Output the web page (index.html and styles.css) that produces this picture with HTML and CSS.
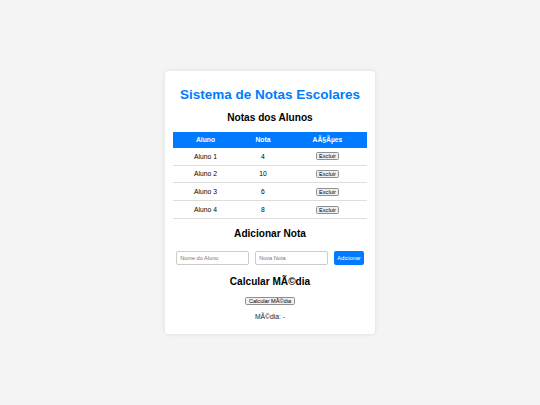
FILE: index.html
```html
<!DOCTYPE html>
<html lang="pt">
<head>
    <meta charset="UTF-8">
    <meta name="viewport" content="width=device-width, initial-scale=1.0">
    <title>Sistema de Notas Escolares</title>
    <link rel="stylesheet" href="styles.css">
</head>
<body>
    <div class="container">
        <h1>Sistema de Notas Escolares</h1>

        <h2>Notas dos Alunos</h2>
        <table class="notas">
            <thead>
                <tr>
                    <th class="col-aluno">Aluno</th>
                    <th class="col-nota">Nota</th>
                    <th>AÃ§Ãµes</th>
                </tr>
            </thead>
            <tbody>
                <tr><td>Aluno 1</td><td>4</td><td><button class="btn-small">Excluir</button></td></tr>
                <tr><td>Aluno 2</td><td>10</td><td><button class="btn-small">Excluir</button></td></tr>
                <tr><td>Aluno 3</td><td>6</td><td><button class="btn-small">Excluir</button></td></tr>
                <tr><td>Aluno 4</td><td>8</td><td><button class="btn-small">Excluir</button></td></tr>
            </tbody>
        </table>

        <h2>Adicionar Nota</h2>
        <div class="form-row">
            <input type="text" class="field" placeholder="Nome do Aluno">
            <input type="text" class="field" placeholder="Nova Nota">
            <button class="btn-add">Adicionar</button>
        </div>

        <h2>Calcular MÃ©dia</h2>
        <div class="media-box">
            <button class="btn-small">Calcular MÃ©dia</button>
        </div>
        <p class="media">MÃ©dia: -</p>
    </div>
</body>
</html>
```

FILE: styles.css
```css
body {
    margin: 0;
    height: 100vh;
    display: flex;
    align-items: center;
    justify-content: center;
    background-color: #f4f4f4;
    font-family: "Liberation Sans", Arial, sans-serif;
    font-size: 6.75px;
    color: #000;
}

.container {
    width: 194px;
    padding: 8.4px;
    background-color: #fff;
    border-radius: 3.4px;
    box-shadow: 0 0 4px rgba(0, 0, 0, 0.1);
    text-align: center;
}

h1 {
    font-size: 13.5px;
    color: #007bff;
    margin: 7.5px 0 10px;
}

h2 {
    font-size: 10.1px;
    margin: 8.4px 0;
}

/* Tabela de notas */
.notas {
    width: 100%;
    margin-top: 9.4px;
    border-collapse: collapse;
}

.notas th,
.notas td {
    padding: 4.2px;
    text-align: center;
}

.notas th {
    background-color: #007bff;
    color: #fff;
}

.notas td {
    height: 8.5px;
    border-bottom: 1px solid #ddd;
}

.col-aluno {
    width: 56.6px;
}

.col-nota {
    width: 41.6px;
}

.btn-small {
    font-family: "Liberation Sans", Arial, sans-serif;
    font-size: 5.6px;
    line-height: 6px;
    padding: 0 2.5px;
    border: 1px solid #8f8f8f;
    border-radius: 1.5px;
    background-color: #efefef;
    color: #000;
    vertical-align: middle;
}

/* Formulario */
.form-row {
    display: flex;
    justify-content: center;
    gap: 6px;
    padding: 4.4px 0 2.8px;
}

.field {
    box-sizing: border-box;
    width: 73px;
    height: 14px;
    padding: 0 3.4px;
    border: 1px solid #ccc;
    border-radius: 2px;
    font-family: "Liberation Sans", Arial, sans-serif;
    font-size: 5.6px;
}

.field::placeholder {
    color: #777;
}

.btn-add {
    box-sizing: border-box;
    height: 14px;
    padding: 0 3.6px;
    border: none;
    border-radius: 2px;
    background-color: #007bff;
    color: #fff;
    font-family: "Liberation Sans", Arial, sans-serif;
    font-size: 5.6px;
}

.media-box {
    height: 9px;
    line-height: 9px;
}

.media {
    margin: 8.5px 0 5.25px;
    color: #222;
}
```
